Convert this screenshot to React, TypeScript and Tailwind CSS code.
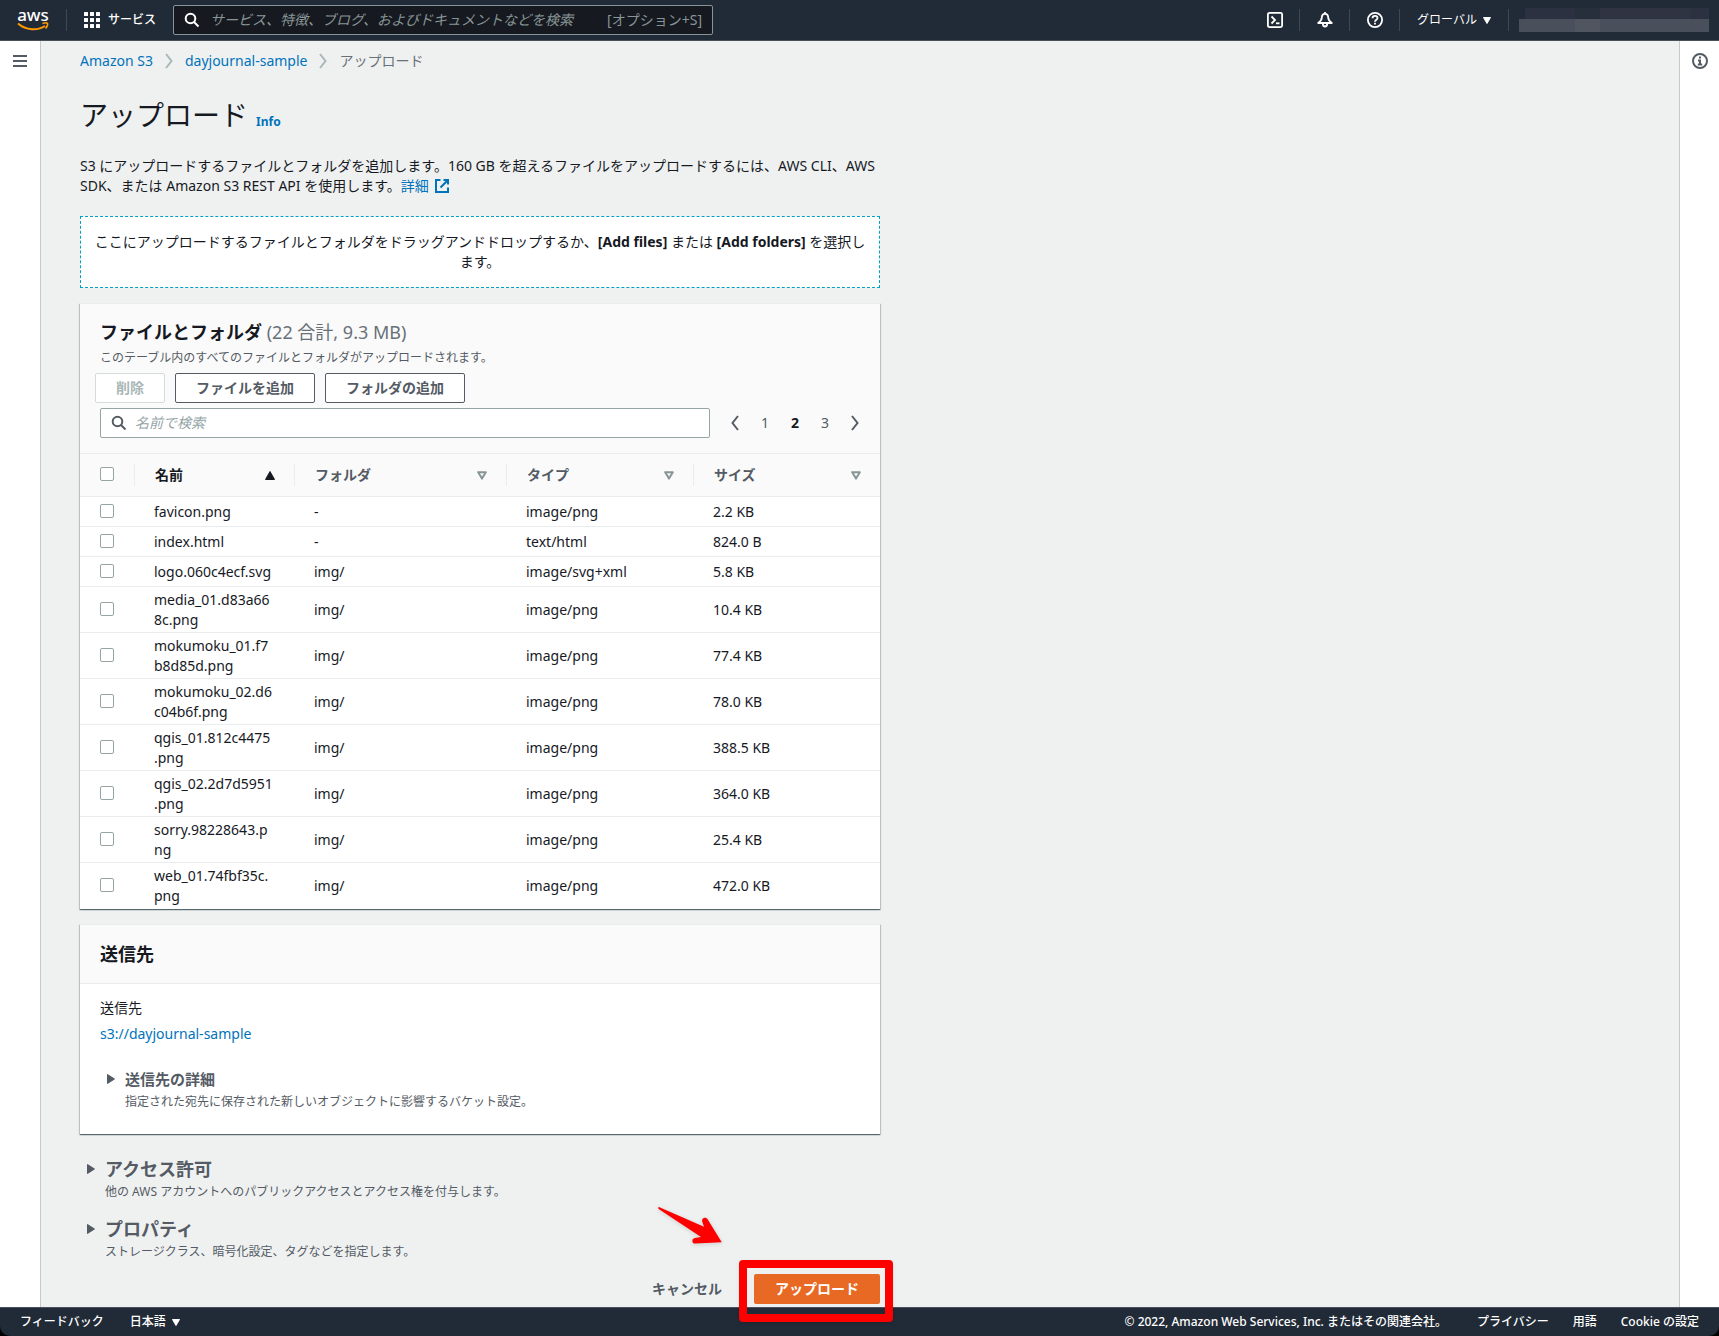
import { useState } from "react";
import type { ReactNode } from "react";

type UploadItem = {
  name: string;
  folder: string;
  type: string;
  size: string;
};

const ITEMS: UploadItem[] = [
  { name: "favicon.png", folder: "-", type: "image/png", size: "2.2 KB" },
  { name: "index.html", folder: "-", type: "text/html", size: "824.0 B" },
  { name: "logo.060c4ecf.svg", folder: "img/", type: "image/svg+xml", size: "5.8 KB" },
  { name: "media_01.d83a668c.png", folder: "img/", type: "image/png", size: "10.4 KB" },
  { name: "mokumoku_01.f7b8d85d.png", folder: "img/", type: "image/png", size: "77.4 KB" },
  { name: "mokumoku_02.d6c04b6f.png", folder: "img/", type: "image/png", size: "78.0 KB" },
  { name: "qgis_01.812c4475.png", folder: "img/", type: "image/png", size: "388.5 KB" },
  { name: "qgis_02.2d7d5951.png", folder: "img/", type: "image/png", size: "364.0 KB" },
  { name: "sorry.98228643.png", folder: "img/", type: "image/png", size: "25.4 KB" },
  { name: "web_01.74fbf35c.png", folder: "img/", type: "image/png", size: "472.0 KB" },
];

const COLUMNS = [
  { label: "名前", sorted: true },
  { label: "フォルダ", sorted: false },
  { label: "タイプ", sorted: false },
  { label: "サイズ", sorted: false },
];

// Longest run of characters that fits on one line of the name column
const NAME_LINE_LENGTH = 16;

const CARD =
  "border-t border-[#eaeded] bg-white shadow-[0_1px_1px_0_rgba(0,28,36,0.5),1px_1px_1px_0_rgba(0,28,36,0.15),-1px_1px_1px_0_rgba(0,28,36,0.15)]";

const CHECKBOX =
  "block size-3.5 appearance-none rounded-xs border border-[#95a5a6] bg-white checked:bg-[#0073bb]";

function SearchIcon({ className }: { className: string }) {
  return (
    <svg viewBox="0 0 16 16" className={className} fill="none" stroke="currentColor" strokeWidth="2">
      <circle cx="6.5" cy="6.5" r="4.8" />
      <path d="M10 10l4.5 4.5" />
    </svg>
  );
}

function CaretDown() {
  return (
    <svg viewBox="0 0 8 7" className="h-[7px] w-2 shrink-0" fill="currentColor">
      <path d="M0.5 0.5h7L4 6.5z" stroke="currentColor" strokeLinejoin="round" />
    </svg>
  );
}

function CaretRight() {
  return (
    <svg viewBox="0 0 8 10" className="h-2.5 w-2 shrink-0" fill="currentColor">
      <path d="M0.5 0.5v9L7.5 5z" stroke="currentColor" strokeLinejoin="round" />
    </svg>
  );
}

function Chevron({ flip, className }: { flip?: boolean; className: string }) {
  return (
    <svg viewBox="0 0 8 16" className={className} fill="none" stroke="currentColor" strokeWidth="2">
      <path d={flip ? "M7 1L1.5 8L7 15" : "M1 1l5.5 7L1 15"} />
    </svg>
  );
}

function AwsLogo() {
  return (
    <a href="#" aria-label="aws" className="flex w-8 flex-col items-center text-white">
      <span className="h-3 text-[17px] leading-[12px] font-medium">aws</span>
      <svg viewBox="0 0 32 11" className="h-[11px] w-8" fill="none" stroke="#f90">
        <path d="M1 2.5C9 9.6 21 9.8 28 5" strokeWidth="2" />
        <path d="M25.5 2.6c2-.8 4.6-.9 5 0c.4.9-.6 3.6-2 4.9" strokeWidth="1.6" />
      </svg>
    </a>
  );
}

function Divider() {
  return <span className="h-[22px] w-px shrink-0 bg-[#414750]" />;
}

function Header() {
  return (
    <header className="flex h-[41px] items-center border-b border-[#4a4f5c] bg-[#212b37] pl-[17px] text-white">
      <AwsLogo />
      <span className="ml-[17px] flex">
        <Divider />
      </span>
      <button type="button" className="ml-[17px] flex items-center gap-2 text-xs font-medium">
        <svg viewBox="0 0 16 16" className="size-4" fill="currentColor">
          {[0, 6, 12].map((y) =>
            [0, 6, 12].map((x) => <rect key={`${x}-${y}`} x={x} y={y} width="4" height="4" rx="0.5" />),
          )}
        </svg>
        サービス
      </button>
      <label className="ml-[17px] flex h-[30px] w-[540px] items-center rounded-xs border border-[#879596] bg-[#16191f] px-2.5">
        <SearchIcon className="size-4 shrink-0" />
        <input
          type="search"
          aria-label="検索"
          placeholder="サービス、特徴、ブログ、およびドキュメントなどを検索"
          className="ml-2.5 min-w-0 flex-1 bg-transparent text-sm outline-none placeholder:text-[#879596] placeholder:italic"
        />
        <span className="text-sm whitespace-nowrap text-[#879596]">[オプション+S]</span>
      </label>
      <div className="ml-auto flex items-center pr-2.5">
        <button type="button" aria-label="CloudShell" className="flex w-[49px] justify-center">
          <svg viewBox="0 0 16 16" className="size-4" fill="none" stroke="currentColor" strokeWidth="1.8">
            <rect x="0.9" y="0.9" width="14.2" height="14.2" rx="1.5" />
            <path d="M4.5 4.5L8 8l-3.5 3.5" />
            <path d="M9 11.3h3.5" />
          </svg>
        </button>
        <Divider />
        <button type="button" aria-label="通知" className="flex w-[49px] justify-center">
          <svg viewBox="0 0 16 16" className="size-4" fill="none" stroke="currentColor" strokeWidth="1.8">
            <path
              d="M8 1.8C5.6 1.8 4.8 3.6 4.8 5.6c0 2.4-.9 3.6-3.6 5.4h13.6c-2.7-1.8-3.6-3-3.6-5.4C11.2 3.6 10.4 1.8 8 1.8z"
              strokeLinejoin="round"
            />
            <path d="M8 0v2" />
            <path d="M5.8 11.5a2.2 3 0 0 0 4.4 0" />
          </svg>
        </button>
        <Divider />
        <button type="button" aria-label="ヘルプ" className="flex w-[49px] justify-center">
          <svg viewBox="0 0 16 16" className="size-4" fill="none" stroke="currentColor" strokeWidth="1.8">
            <circle cx="8" cy="8" r="7.1" />
            <path d="M5.5 6.3c0-1.5 1.1-2.4 2.5-2.4s2.5.9 2.5 2.2c0 1.6-2.5 1.7-2.5 3.6" />
            <path d="M8 10.8v1.8" />
          </svg>
        </button>
        <Divider />
        <button type="button" className="flex items-center gap-1.5 px-[17px] text-xs">
          グローバル
          <CaretDown />
        </button>
        <Divider />
        <span className="ml-2.5 flex w-[190px] flex-col">
          <span className="ml-1.5 flex h-[11px] bg-[#2b3140]">
            <span className="w-[50px]" />
            <span className="w-[25px] bg-[#282f3c]" />
            <span className="flex-1 bg-[#303442]" />
            <span className="w-[19px]" />
          </span>
          <span className="flex h-[13px] bg-[#4a4f5c]">
            <span className="ml-14 w-[25px] bg-[#50555f]" />
          </span>
        </span>
      </div>
    </header>
  );
}

function Breadcrumbs() {
  return (
    <nav className="flex h-5 items-center gap-3 text-sm">
      <a href="#" className="text-[#0073bb]">
        Amazon S3
      </a>
      <Chevron className="h-4 w-2 text-[#aab7b8]" />
      <a href="#" className="text-[#0073bb]">
        dayjournal-sample
      </a>
      <Chevron className="h-4 w-2 text-[#aab7b8]" />
      <span className="text-[#687078]">アップロード</span>
    </nav>
  );
}

function OutlineButton({ disabled, children }: { disabled?: boolean; children: ReactNode }) {
  return (
    <button
      type="button"
      disabled={disabled}
      className="h-[30px] rounded-xs border border-[#545b64] bg-white px-5 text-sm font-bold text-[#545b64] disabled:border-[#d5dbdb] disabled:text-[#aab7b8]"
    >
      {children}
    </button>
  );
}

function Pagination() {
  const [page, setPage] = useState(2);

  return (
    <div className="flex items-center text-sm text-[#545b64]">
      <button
        type="button"
        aria-label="前のページ"
        onClick={() => setPage(Math.max(1, page - 1))}
        className="flex w-[30px] justify-center"
      >
        <Chevron flip className="h-4 w-2" />
      </button>
      {[1, 2, 3].map((n) => (
        <button
          key={n}
          type="button"
          onClick={() => setPage(n)}
          className={n === page ? "w-[30px] font-bold text-[#16191f]" : "w-[30px]"}
        >
          {n}
        </button>
      ))}
      <button
        type="button"
        aria-label="次のページ"
        onClick={() => setPage(Math.min(3, page + 1))}
        className="flex w-[30px] justify-center"
      >
        <Chevron className="h-4 w-2" />
      </button>
    </div>
  );
}

function FileName({ name }: { name: string }) {
  // Keep the extension whole when it would start the second line
  if (name.lastIndexOf(".") === NAME_LINE_LENGTH) {
    return (
      <>
        {name.slice(0, NAME_LINE_LENGTH)}
        <wbr />
        {name.slice(NAME_LINE_LENGTH)}
      </>
    );
  }
  return <>{name}</>;
}

function FilesTable() {
  return (
    <table className="w-full table-fixed border-collapse text-left text-sm leading-5">
      <colgroup>
        <col className="w-[54px]" />
        <col className="w-[160px]" />
        <col className="w-[212px]" />
        <col className="w-[187px]" />
        <col />
      </colgroup>
      <thead className="bg-[#fafafa]">
        <tr className="h-[43px] border-t border-[#eaeded]">
          <th className="p-0 pb-0.5 pl-5">
            <input type="checkbox" aria-label="すべて選択" className={CHECKBOX} />
          </th>
          {COLUMNS.map((col) => (
            <th key={col.label} className="p-0">
              <button
                type="button"
                className={`flex h-[22px] w-full items-center justify-between border-l border-[#eaeded] pr-[19px] pl-5 font-bold ${
                  col.sorted ? "text-[#16191f]" : "text-[#545b64]"
                }`}
              >
                {col.label}
                {col.sorted ? (
                  <svg viewBox="0 0 10 9" className="h-[9px] w-2.5" fill="currentColor">
                    <path d="M5 0.5l4.5 8h-9z" stroke="currentColor" strokeLinejoin="round" />
                  </svg>
                ) : (
                  <svg
                    viewBox="0 0 10 9"
                    className="h-[9px] w-2.5 text-[#879596]"
                    fill="none"
                    stroke="currentColor"
                    strokeWidth="2"
                  >
                    <path d="M1.2 1.2h7.6L5 7.6z" strokeLinejoin="round" />
                  </svg>
                )}
              </button>
            </th>
          ))}
        </tr>
      </thead>
      <tbody>
        {ITEMS.map((item) => (
          <tr key={item.name} className="h-[30px] border-t border-[#eaeded]">
            <td className="p-0 pb-0.5 pl-5">
              <input type="checkbox" aria-label={item.name} className={CHECKBOX} />
            </td>
            <td className="pt-[3px] pr-5 pb-0.5 pl-5 wrap-break-word">
              <FileName name={item.name} />
            </td>
            <td className="px-5 py-0">{item.folder}</td>
            <td className="px-5 py-0">{item.type}</td>
            <td className="px-5 py-0">{item.size}</td>
          </tr>
        ))}
      </tbody>
    </table>
  );
}

function FilesCard() {
  return (
    <section className={`mt-[15px] pb-px ${CARD}`}>
      <div className="bg-[#fafafa] px-5 pt-4 pb-[15px]">
        <h2 className="text-lg leading-6 font-bold">
          ファイルとフォルダ <span className="font-normal text-[#687078]">(22 合計, 9.3 MB)</span>
        </h2>
        <p className="mt-1 text-xs leading-5 text-[#545b64]">
          このテーブル内のすべてのファイルとフォルダがアップロードされます。
        </p>
        <div className="mt-[5px] -ml-[5px] flex gap-2.5">
          <OutlineButton disabled>削除</OutlineButton>
          <OutlineButton>ファイルを追加</OutlineButton>
          <OutlineButton>フォルダの追加</OutlineButton>
        </div>
        <div className="mt-[5px] -mr-2.5 flex items-center gap-2.5">
          <label className="flex h-[30px] flex-1 items-center gap-2 rounded-xs border border-[#95a5a6] bg-white px-2.5">
            <SearchIcon className="size-4 shrink-0 text-[#545b64]" />
            <input
              type="search"
              aria-label="名前で検索"
              placeholder="名前で検索"
              className="min-w-0 flex-1 bg-transparent text-sm outline-none placeholder:text-[#95a5a6] placeholder:italic"
            />
          </label>
          <Pagination />
        </div>
      </div>
      <FilesTable />
    </section>
  );
}

function DestinationCard() {
  return (
    <section className={`mt-[15px] ${CARD}`}>
      <div className="border-b border-[#eaeded] bg-[#fafafa] px-5 py-[17px]">
        <h2 className="text-lg leading-6 font-bold">送信先</h2>
      </div>
      <div className="px-5 pt-3.5 pb-[22px] text-sm leading-5">
        <p>送信先</p>
        <a href="#" className="mt-1.5 block text-[#0073bb]">
          s3://dayjournal-sample
        </a>
        <button type="button" className="mt-[25px] flex gap-2.5 pl-[7px] text-left text-[#545b64]">
          <span className="flex h-5 items-center">
            <CaretRight />
          </span>
          <span>
            <span className="block text-[15px] leading-5 font-bold">送信先の詳細</span>
            <span className="mt-[3px] block text-xs leading-5">
              指定された宛先に保存された新しいオブジェクトに影響するバケット設定。
            </span>
          </span>
        </button>
      </div>
    </section>
  );
}

function ExpandableSection({ title, description }: { title: string; description: string }) {
  return (
    <button type="button" className="flex gap-2.5 pl-[7px] text-left text-[#545b64]">
      <span className="flex h-6 items-center">
        <CaretRight />
      </span>
      <span>
        <span className="block text-lg leading-6 font-bold">{title}</span>
        <span className="mt-px block text-xs leading-5">{description}</span>
      </span>
    </button>
  );
}

// Red box and arrow pointing at the upload button
function Highlight() {
  return (
    <>
      <span className="pointer-events-none absolute -top-3.5 -right-[13px] -bottom-[18px] -left-[15px] z-10 rounded-sm border-8 border-[#ff0000] shadow-sm" />
      <svg
        viewBox="0 0 68 42"
        className="pointer-events-none absolute -top-[70px] -left-[98px] h-[42px] w-[68px] drop-shadow-sm"
      >
        <path
          d="M3.5 3.2L48 22.8L46.2 17.5C45.2 13.8 49.6 12.2 51.6 15.2L65.8 38.2L39 39.6C35.6 39.6 35.4 34.6 38.8 34L45 33L3 5.2C1.6 4.2 2.3 2.7 3.5 3.2z"
          fill="#ff0000"
        />
      </svg>
    </>
  );
}

function Footer() {
  return (
    <footer className="flex h-[29px] items-center rounded-b-[10px] border-t border-[#4a4f5c] bg-[#212b37] px-5 text-xs font-medium text-white">
      <a href="#">フィードバック</a>
      <button type="button" className="ml-[26px] flex items-center gap-1.5">
        日本語
        <CaretDown />
      </button>
      <span className="ml-auto">© 2022, Amazon Web Services, Inc. またはその関連会社。</span>
      <a href="#" className="ml-[30px]">
        プライバシー
      </a>
      <a href="#" className="ml-6">
        用語
      </a>
      <a href="#" className="ml-6">
        Cookie の設定
      </a>
    </footer>
  );
}

export default function App() {
  return (
    <div className="flex min-h-screen flex-col bg-black font-['Noto_Sans','Noto_Sans_CJK_JP',sans-serif] text-[#16191f]">
      <Header />
      <div className="flex flex-1 bg-[#eff1f1]">
        <aside className="w-[41px] shrink-0 border-r border-[#c5cbcb] bg-white pt-[14px] pl-[13px] text-[#545b64]">
          <button type="button" aria-label="メニューを開く" className="block">
            <svg viewBox="0 0 14 12" className="h-3 w-3.5" fill="currentColor">
              <path d="M0 0h14v2H0zM0 5h14v2H0zM0 10h14v2H0z" />
            </svg>
          </button>
        </aside>

        <main className="min-w-0 flex-1 px-[39px] pt-2.5">
          <div className="max-w-[800px]">
            <Breadcrumbs />
            <h1 className="mt-6 flex items-baseline gap-2 text-[28px] leading-10">
              アップロード
              <a href="#" className="text-xs font-bold text-[#0073bb]">
                Info
              </a>
            </h1>
            <p className="mt-[21px] text-sm leading-5">
              S3 にアップロードするファイルとフォルダを追加します。160 GB を超えるファイルをアップロードするには、AWS CLI、AWS SDK、または
              Amazon S3 REST API を使用します。
              <a href="#" className="text-[#0073bb]">
                詳細
                <svg
                  viewBox="0 0 14 14"
                  className="ml-1.5 inline size-3.5 align-[-2px]"
                  fill="none"
                  stroke="currentColor"
                  strokeWidth="2"
                >
                  <path d="M5.5 1H1v12h12V8.5" />
                  <path d="M8.5 1H13v4.5M13 1L5.5 8.5" />
                </svg>
              </a>
            </p>
            <div className="mt-5 border border-dashed border-[#00a1c9] bg-white px-2.5 py-[15px] text-center text-sm leading-5">
              ここにアップロードするファイルとフォルダをドラッグアンドドロップするか、<b>[Add files]</b> または <b>[Add folders]</b> を選択します。
            </div>

            <FilesCard />
            <DestinationCard />

            <div className="mt-[23px] flex flex-col items-start gap-[15px]">
              <ExpandableSection
                title="アクセス許可"
                description="他の AWS アカウントへのパブリックアクセスとアクセス権を付与します。"
              />
              <ExpandableSection title="プロパティ" description="ストレージクラス、暗号化設定、タグなどを指定します。" />
            </div>

            <div className="mt-3 mb-[3px] flex items-center justify-end gap-8">
              <button type="button" className="text-sm font-bold text-[#545b64]">
                キャンセル
              </button>
              <div className="relative">
                <button type="button" className="h-[30px] rounded-xs bg-[#e86923] px-[21px] text-sm font-bold text-white">
                  アップロード
                </button>
                <Highlight />
              </div>
            </div>
          </div>
        </main>

        <aside className="w-10 shrink-0 border-l border-[#c5cbcb] bg-white pt-3 pl-3 text-[#545b64]">
          <button type="button" aria-label="情報を開く" className="block">
            <svg viewBox="0 0 16 16" className="size-4" fill="none" stroke="currentColor" strokeWidth="2">
              <circle cx="8" cy="8" r="7" />
              <path d="M8 3.6v2M6 7.5h2v4M5.8 11.5h4.4" />
            </svg>
          </button>
        </aside>
      </div>
      <Footer />
    </div>
  );
}
